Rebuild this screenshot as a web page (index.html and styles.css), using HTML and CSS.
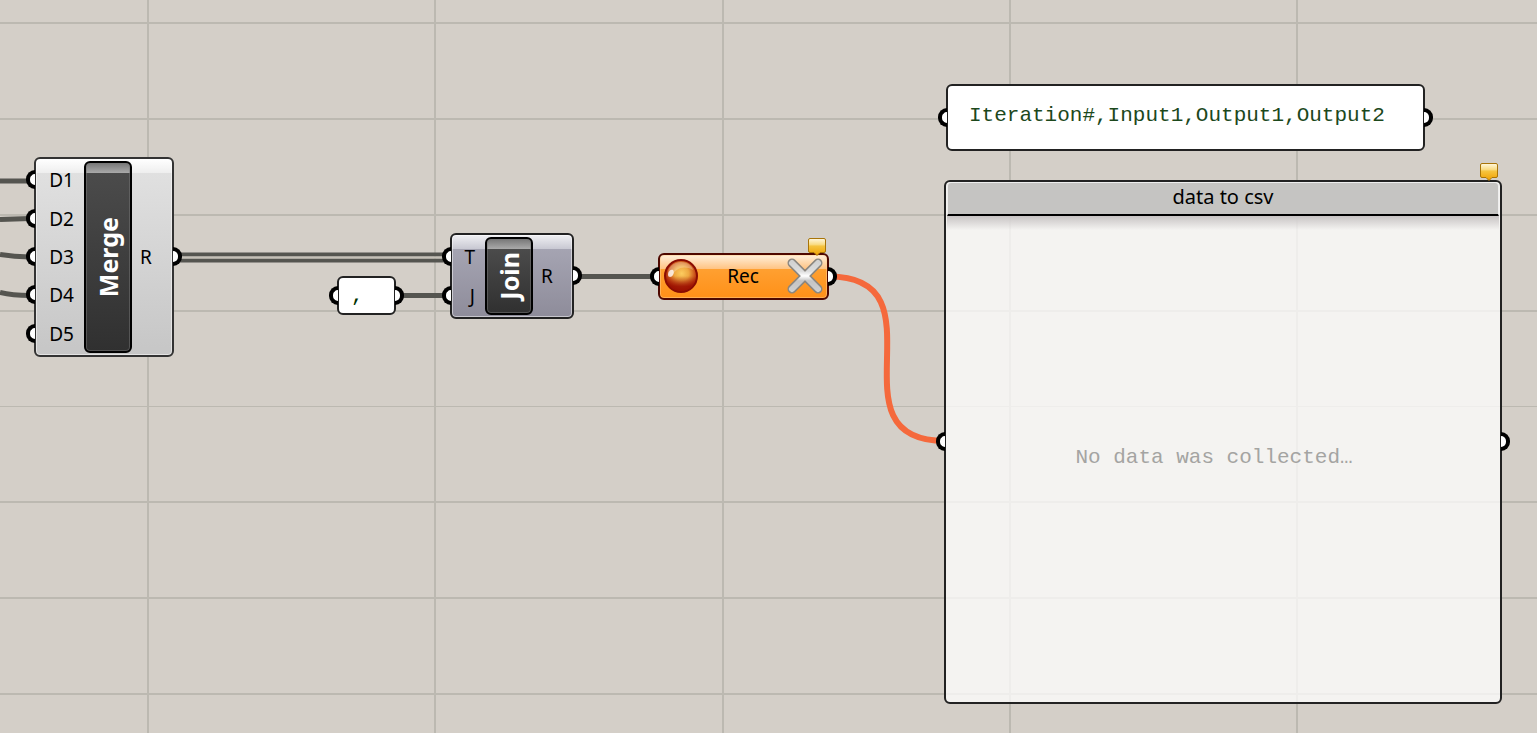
FILE: index.html
```html
<!DOCTYPE html>
<html lang="en">
<head>
<meta charset="utf-8">
<title>Definition canvas</title>
<link rel="stylesheet" href="styles.css">
</head>
<body>
<main class="canvas">
  <svg class="wires" aria-hidden="true">
    <defs>
      <linearGradient id="gold" x1="0" y1="0" x2="0" y2="1">
        <stop offset="0" stop-color="#fff8e0"/><stop offset=".35" stop-color="#f9dc84"/><stop offset=".45" stop-color="#f5c440"/><stop offset="1" stop-color="#f0a000"/>
      </linearGradient>
      <radialGradient id="ball" cx=".52" cy=".42" r=".56">
        <stop offset="0" stop-color="#fccc60"/><stop offset=".4" stop-color="#eea840"/><stop offset=".75" stop-color="#c84e18"/><stop offset="1" stop-color="#a01400"/>
      </radialGradient>
      <linearGradient id="shade" x1="0" y1="0" x2="0" y2="1">
        <stop offset=".5" stop-color="#980c00" stop-opacity="0"/><stop offset=".85" stop-color="#980c00" stop-opacity=".8"/>
      </linearGradient>
      <linearGradient id="steel" gradientUnits="userSpaceOnUse" x1="0" y1="2" x2="0" y2="34">
        <stop offset="0" stop-color="#cfcfcf"/><stop offset=".35" stop-color="#dddddd"/><stop offset=".5" stop-color="#ffffff"/><stop offset=".65" stop-color="#c4c4c4"/><stop offset="1" stop-color="#d0d0d0"/>
      </linearGradient>
      <symbol id="badge" viewBox="0 0 20 20">
        <path d="M3 1.500H17Q18.500 1.500 18.500 3V14Q18.500 15.500 17 15.500H13L10 18.500L7 15.500H3Q1.500 15.500 1.500 14V3Q1.500 1.500 3 1.500Z" fill="url(#gold)" stroke="#a87408"/>
      </symbol>
    </defs>
    <g class="grid-lines">
      <path d="M148 0V2000M435 0V2000M723 0V2000M1010 0V2000M1297 0V2000"/>
      <path d="M0 23H4000M0 119H4000M0 215H4000M0 311H4000M0 502H4000M0 598H4000M0 694H4000"/>
      <path class="thin" d="M0 406.500H4000"/>
    </g>
    <g class="wire">
      <path d="M0 181H30M0 219.500L30 218.500M0 254.500Q14 257 30 257M0 292.500Q12 295.500 30 295.500M398 295.500H448M576 276.500H656"/>
      <path class="double" d="M176 254.500H448M176 260.500H448"/>
      <path class="gap" d="M176 257.500H448"/>
      <path class="recorded" d="M829 276.500C949 276.500 825 441 945 441"/>
    </g>
  </svg>

  <section class="node component merge">
    <div class="inputs">
      <div class="row"><span class="port in"></span>D1</div>
      <div class="row"><span class="port in"></span>D2</div>
      <div class="row"><span class="port in"></span>D3</div>
      <div class="row"><span class="port in"></span>D4</div>
      <div class="row"><span class="port in"></span>D5</div>
    </div>
    <h2 class="capsule"><span>Merge</span></h2>
    <div class="outputs"><div class="row">R<span class="port out"></span></div></div>
  </section>

  <section class="node comma"><span class="port in"></span>,<span class="port out"></span></section>

  <section class="node component join">
    <div class="inputs">
      <div class="row"><span class="port in"></span>T</div>
      <div class="row"><span class="port in"></span>J</div>
    </div>
    <h2 class="capsule"><span>Join</span></h2>
    <div class="outputs"><div class="row">R<span class="port out"></span></div></div>
  </section>

  <section class="node recorder">
    <span class="port in"></span>
    <button class="icon-button" aria-label="Record">
      <svg viewBox="0 0 36 36"><circle cx="18" cy="18" r="16" fill="url(#ball)" stroke="#8a0c02" stroke-width="2"/><circle cx="18" cy="18" r="15" fill="url(#shade)"/><path d="M5 17C4 9 11 4 18 4C25 4 29 8 30 12C21 7 13 10 9 18Z" fill="#fff" opacity=".25"/><path d="M5 17C5 13 8 11 10 12C12 14 10 19 7 19Q5 19 5 17Z" fill="#fff" opacity=".75"/></svg>
    </button>
    <span>Rec</span>
    <button class="icon-button" aria-label="Clear">
      <svg viewBox="0 0 36 36"><g fill="none" stroke-linecap="round"><path d="M5 5L31 31M31 5L5 31" stroke="#8a8680" stroke-width="9"/><path d="M5 5L31 31M31 5L5 31" stroke="url(#steel)" stroke-width="6"/></g></svg>
    </button>
    <svg class="badge"><use href="#badge"/></svg>
    <span class="port out"></span>
  </section>

  <section class="node header-text"><span class="port in"></span>Iteration#,Input1,Output1,Output2<span class="port out"></span></section>

  <section class="node panel">
    <h1 class="panel-title">data to csv</h1>
    <p class="panel-body">No data was collected…</p>
    <svg class="badge"><use href="#badge"/></svg>
    <span class="port in"></span><span class="port out"></span>
  </section>
</main>
</body>
</html>
```
FILE: styles.css
```css
* { box-sizing: border-box; }
body { margin: 0; }
.canvas {
  position: relative;
  min-height: 100vh;
  overflow: hidden;
  background: #d4cfc8;
  color: #000;
  font: 19px/24px "Noto Sans", "Open Sans", sans-serif;
}
.wires { position: absolute; inset: 0; width: 100%; height: 100%; }
.grid-lines { fill: none; stroke: #bcb9b1; stroke-width: 2; }
.grid-lines .thin { stroke-width: 1; }
.wire { fill: none; stroke: #555550; stroke-width: 5; }
.wire .double { stroke-width: 4; }
.wire .gap { stroke: #c4c0b6; stroke-width: 2; }
.wire .recorded { stroke: #f5693c; stroke-width: 6; }

/* Nodes sit at free positions on the canvas */
.node { position: absolute; display: flex; border: 2px solid #222; border-radius: 6px; }
.port {
  position: absolute;
  top: 50%;
  width: 9px;
  height: 19px;
  margin-top: -10px;
  border: 4px solid #000;
  background: #fff;
}
.port.in { right: 100%; margin-right: 1px; border-right: 0; border-radius: 9px 0 0 9px; }
.port.out { left: 100%; margin-left: 1px; border-left: 0; border-radius: 0 9px 9px 0; }

.component { padding: 2px 0; box-shadow: inset 0 0 0 1px #ffffff80; }
.inputs, .outputs { display: flex; flex-direction: column; }
.row { position: relative; flex: 1; display: flex; align-items: center; justify-content: flex-end; }
.inputs .row { padding-right: 10px; }
.outputs .row { padding-left: 8px; justify-content: flex-start; }
.capsule {
  display: flex;
  align-items: center;
  justify-content: center;
  width: 48px;
  margin: 0;
  border: 2px solid #000;
  border-radius: 6px;
  background: linear-gradient(#777, #aaa 10px, #4b4b4b 10px, #303030);
  box-shadow: inset 0 0 0 1px #77777780;
  color: #fff;
  font-size: 25px;
  line-height: 36px;
}
.capsule span { writing-mode: vertical-rl; transform: rotate(180deg); }
.merge {
  left: 34px; top: 157px; width: 140px; height: 200px;
  background: linear-gradient(#fff, #eee 14px, #e0e0e0 14px, #c6c6c6);
  border-color: #333;
}
.merge .inputs { width: 48px; }
.outputs { flex: 1; }
.join {
  left: 450px; top: 233px; width: 124px; height: 86px;
  background: linear-gradient(#f0f0f3, #c8c8d2 14px, #a5a4b2 14px, #8e8c9a);
}
.join .inputs { width: 33px; }
.comma, .header-text {
  align-items: center;
  background: #fff;
  color: #1c481c;
  font: 21px/24px "Liberation Mono", monospace;
}
.comma { left: 337px; top: 276px; width: 59px; height: 39px; padding-left: 12px; color: #003200; }
.header-text { left: 946px; top: 84px; width: 479px; height: 67px; padding: 0 21px 4px; }

.recorder {
  left: 658px; top: 253px; width: 171px; height: 47px;
  align-items: center;
  justify-content: space-between;
  padding: 0 4px 2px 3px;
  border-color: #4e0800;
  background: linear-gradient(#fff0dc, #ffc382 14px, #ffa031 14px, #ff9018);
  box-shadow: inset 0 0 0 1px #ffd09080;
}
.icon-button { width: 36px; height: 36px; padding: 0; border: 0; background: none; }
.icon-button svg { display: block; width: 36px; height: 36px; }
.badge { position: absolute; right: 0; bottom: 100%; width: 20px; height: 20px; margin-bottom: -2px; }

.panel {
  left: 944px; top: 180px; width: 558px; height: 524px;
  flex-direction: column;
  background: #ffffffbf;
  background-clip: padding-box;
}
.panel .badge { right: 1px; margin-bottom: 0; }
.panel-title {
  height: 34px;
  margin: 0 1px;
  border: 1px solid #eee;
  border-bottom: 2px solid #000;
  border-radius: 4px 4px 0 0;
  background: #c5c4c2;
  font-size: 20px;
  font-weight: 400;
  line-height: 28px;
  text-align: center;
}
.panel-body {
  flex: 1;
  display: flex;
  align-items: center;
  justify-content: center;
  margin: 0 1px;
  padding: 0 18px 2px 0;
  background: linear-gradient(#c8c4c4, #c8c4c400 14px);
  color: #a4a4a2;
  font: 21px/24px "Liberation Mono", monospace;
}
```
